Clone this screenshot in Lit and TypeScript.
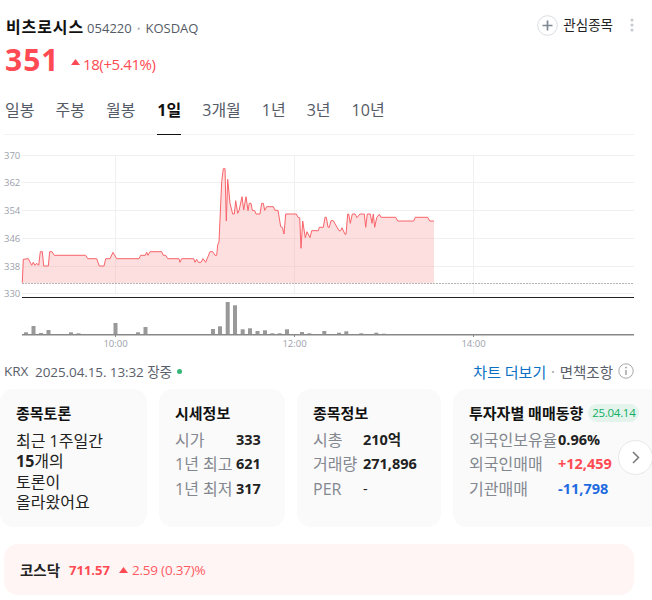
import { LitElement, html, css, svg } from "lit";
import { customElement } from "lit/decorators.js";

const LINE: number[][] = [[22.3,282.7],[23.3,259.3],[28.3,258.7],[31.7,265.3],[33.3,262.3],[35,265.3],[36.7,263.3],[38.7,265.3],[40.3,251.7],[42.3,251.7],[43.7,266],[48.3,266],[49.7,251.7],[52,251.7],[54.3,255.3],[85.7,255.3],[87.7,258.7],[96.7,258.7],[99.3,266],[104,266],[105.7,258.7],[110,258.7],[113,252.3],[116.7,258.7],[139,258.7],[140.7,255.3],[145.3,255.3],[146.7,252.3],[148,255.3],[150,251.7],[161.7,251.7],[163.3,255.3],[165.7,255.3],[167.7,258.7],[179,258.7],[180,262.3],[181.7,258.7],[193.7,258.7],[195,262.3],[196.7,259.3],[198.3,262.3],[201,262.3],[203,258.7],[205.7,262.3],[210,251.7],[212.7,251.7],[215,255.3],[216.7,255.3],[217.7,245],[219,241.7],[221.7,181.7],[223.3,168.7],[225,168.7],[226.3,221],[227.7,179.3],[230,203.3],[232.7,214],[234.3,214],[235.7,200.7],[237.7,213.3],[239,210.7],[242,196.7],[243.7,210],[246,196.7],[248,210.7],[249.3,203.3],[251,203.3],[252.3,210.3],[254.7,210.7],[256,214],[260,214],[261.7,203.3],[263.3,203.3],[264.7,210.3],[266.7,206.7],[273.3,206.7],[275,210.3],[278,210.3],[280.7,226.7],[282.3,227.3],[284,234],[285.7,214],[296.3,214],[298.3,217.7],[299.7,217.7],[301,248.3],[302.7,221],[305.3,237.7],[307,231.7],[310,237.7],[311.7,230.7],[318.3,230.7],[319.3,227.3],[323.3,227.3],[325,217.3],[326.3,217.3],[328,227.3],[329.3,227.3],[331,220.7],[333.3,220.7],[339,230.7],[340.7,230.7],[342,227.7],[345,234.3],[346,234.3],[347.7,214],[348.7,214],[350.3,223.3],[352.3,214],[355,214],[357,217.7],[360,214],[364.3,214],[365.7,227.3],[367.3,214],[370.3,214],[372,223.3],[373.3,214],[374.7,227.3],[376.7,217.7],[379.3,214.3],[381,217.3],[395.7,217.3],[397.7,221],[413.7,221],[415.3,217.3],[427.7,217.3],[429.7,221],[434,221]];

const BARS: number[][] = [[24,332.3],[31.5,326],[39,333],[46.5,330],[69,332.3],[76.5,333.3],[113.5,323],[121,334],[128.5,334],[136,332.3],[143.5,327],[173,334],[181,334],[203.5,334],[211,329],[218,326.3],[225.7,302],[233,305.3],[240.7,329.3],[248,328.3],[255.5,331],[263,330.3],[270.3,333.3],[277.7,333.3],[285,329.3],[292.7,334],[300,332],[307.3,333.3],[315,334],[322.3,331],[337,332.7],[344.3,331.3],[359.3,333.3],[374.3,332.7],[382,333.7],[397,334],[404.3,334],[411.7,334]];

const GRID: [number, string][] = [[155.5,"370"],[182.5,"362"],[210.5,"354"],[238.5,"346"],[266.5,"338"],[293.5,"330"]];
const TIMES: [number, string][] = [[115.5,"10:00"],[294.5,"12:00"],[473.5,"14:00"]];

@customElement("app-root")
export class AppRoot extends LitElement {
  static styles = css`
    :host {
      display: block;
      width: 652px;
      height: 600px;
      overflow: hidden;
      background: #fff;
      color: #111;
      font-family: "Open Sans", "Noto Sans CJK KR", sans-serif;
    }
    .head { display: flex; justify-content: space-between; padding: 16px 18px 0 6px; height: 25px; }
    .title { display: flex; align-items: baseline; gap: 3px; }
    .name { font-size: 16px; font-weight: 700; line-height: 22px; letter-spacing: 0.9px; }
    .code { font-size: 13px; color: #555b66; line-height: 22px; display: flex; gap: 5px; align-items: baseline; }
    .sep { color: #b5b8bd; font-size: 10px; }
    .actions { display: flex; align-items: center; gap: 5px; height: 20px; margin-top: -1px; }
    .plus { display: block; }
    .fav { font-size: 13.5px; color: #222; line-height: 20px; }
    .more { display: block; margin-left: 12px; }
    .price { display: flex; align-items: center; padding: 0 0 0 5px; height: 36px; color: #ff4a53; margin-top: 1px; }
    .big { font-size: 30px; font-weight: 700; line-height: 36px; letter-spacing: 1px; width: 66px; }
    .up { display: block; margin-top: 3px; }
    .chg { font-size: 15px; margin-left: 3px; letter-spacing: -0.4px; padding-top: 8px; line-height: 20px; }
    .tabs { display: flex; gap: 21px; margin: 18px 18px 0 4px; padding-left: 1px; height: 38px; border-bottom: 1px solid #f2f2f2; box-sizing: content-box; }
    .tab { font-size: 16px; color: #555b66; line-height: 21px; padding-top: 4px; height: 34px; box-sizing: border-box; position: relative; }
    .tab.on { color: #111; font-weight: 700; height: 39px; border-bottom: 1px solid #111; margin-left: 1px; }
    .chart { display: block; margin-top: 10px; }
    .axis { font-size: 9.5px; fill: #9ba1ab; font-family: "Open Sans", sans-serif; }
    .status { display: flex; justify-content: space-between; align-items: center; padding: 0 18px 0 4px; height: 20px; margin-top: 6px; font-size: 13.5px; color: #5a606b; }
    .left, .right { display: flex; align-items: center; }
    .left { gap: 7px; letter-spacing: -0.1px; }
    .dot { width: 5px; height: 5px; border-radius: 50%; background: #35b678; margin-left: -2px; }
    .more-link { color: #0b6fc4; font-size: 15px; }
    .mid { color: #aaa; margin: 0 5px; font-size: 9px; }
    .disc { font-size: 14.5px; }
    .info { display: block; margin-left: 5px; }
    .wrap { position: relative; margin-top: 8px; }
    .cards { display: flex; gap: 12px; overflow: hidden; }
    .card { flex: none; height: 138px; background: #fafafa; border-radius: 14px; padding: 13px 0 0 16px; box-sizing: border-box; }
    .c1 { width: 147px; } .c2 { width: 126px; } .c3 { width: 144px; } .c4 { width: 215px; }
    .ct { font-size: 15px; font-weight: 700; line-height: 22px; display: flex; align-items: center; gap: 5px; white-space: nowrap; }
    .badge { font-size: 11.5px; font-weight: 400; color: #0fae63; background: #e4f4ec; border-radius: 9px; line-height: 18px; padding: 0 4px; letter-spacing: -0.3px; }
    .body { margin-top: 7px; font-size: 16px; line-height: 20.3px; color: #222; }
    .body b { font-weight: 700; }
    .rows { display: grid; margin-top: 4px; row-gap: 0; align-items: center; }
    .r2 { grid-template-columns: 61px 1fr; }
    .r3 { grid-template-columns: 50px 1fr; }
    .r4 { grid-template-columns: 89px 1fr; }
    .k { font-size: 16px; line-height: 24.3px; color: #83878f; white-space: nowrap; }
    .v { font-size: 14.5px; font-weight: 700; line-height: 24.3px; color: #222; white-space: nowrap; }
    .v.n { font-weight: 400; }
    .red { color: #ff4a53; } .blue { color: #1f6ce0; }
    .next { position: absolute; left: 618px; top: 51px; width: 35px; height: 35px; border-radius: 50%; background: #fff; border: 1px solid #e8e8e8; box-sizing: border-box; display: flex; align-items: center; justify-content: center; }
    .banner { margin: 17px 18px 0 4px; height: 51px; border-radius: 14px; background: #fff5f5; display: flex; align-items: center; padding-left: 16px; font-size: 13px; gap: 9px; }
    .bn { font-weight: 700; color: #222; font-size: 14.5px; }
    .bv { font-weight: 700; color: #ff4a53; }
    .bc { color: #ff5a62; display: flex; align-items: center; gap: 4px; letter-spacing: -0.2px; font-size: 13.5px; }
  `;

  private chart() {
    const pts = LINE.map((p) => p.join(",")).join(" ");
    const area = `22.3,283 ${pts} 434,283`;
    return html`<svg class="chart" width="652" height="210" viewBox="0 145 652 210" aria-hidden="true">
      ${GRID.map(([y, t]) => svg`
        <line x1="22" x2="634" y1=${y} y2=${y} stroke="#f0f0f0"></line>
        <text class="axis" x="4" y=${y + 3}>${t}</text>`)}
      ${TIMES.map(([x, t]) => svg`
        <line x1=${x} x2=${x} y1="155" y2="294" stroke="#f0f0f0"></line>
        <line x1=${x} x2=${x} y1="334" y2="337" stroke="#888"></line>
        <text class="axis" x=${x} y="347" text-anchor="middle">${t}</text>`)}
      <polygon points=${area} fill="#f9a5a5" fill-opacity="0.36"></polygon>
      <polyline points=${pts} fill="none" stroke="#f9636a" stroke-width="1" stroke-linejoin="round"></polyline>
      <line x1="22" x2="634" y1="283.5" y2="283.5" stroke="#b3b3b3" stroke-dasharray="2 1"></line>
      <line x1="22" x2="634" y1="297.5" y2="297.5" stroke="#222"></line>
      ${BARS.map(([x, y]) => svg`<rect x=${x} y=${y} width="4" height=${335 - y} fill="#999"></rect>`)}
      <rect x="22" y="334" width="612" height="1.5" fill="#888"></rect>
    </svg>`;
  }

  render() {
    return html`
      <div class="head">
        <div class="title">
          <span class="name">비츠로시스</span>
          <span class="code"><span>054220</span><span class="sep">•</span><span>KOSDAQ</span></span>
        </div>
        <div class="actions">
          <svg class="plus" width="21" height="21" viewBox="0 0 21 21">
            <circle cx="10.5" cy="10.5" r="9.8" fill="#fff" stroke="#d8dce2"></circle>
            <path d="M10.5 5.5v10M5.5 10.5h10" stroke="#7e8794" stroke-width="1.7"></path>
          </svg>
          <span class="fav">관심종목</span>
          <svg class="more" width="4" height="14" viewBox="0 0 4 14">
            <circle cx="2" cy="2" r="1.6" fill="#c6cad1"></circle>
            <circle cx="2" cy="7" r="1.6" fill="#c6cad1"></circle>
            <circle cx="2" cy="12" r="1.6" fill="#c6cad1"></circle>
          </svg>
        </div>
      </div>
      <div class="price">
        <span class="big">351</span>
        <svg class="up" width="9" height="6" viewBox="0 0 9 6"><path d="M4.5 0 9 6H0z" fill="#ff4a53"></path></svg>
        <span class="chg">18(+5.41%)</span>
      </div>
      <div class="tabs">
        ${["일봉","주봉","월봉","1일","3개월","1년","3년","10년"].map(
          (t) => html`<span class="tab ${t === "1일" ? "on" : ""}">${t}</span>`
        )}
      </div>
      ${this.chart()}
      <div class="status">
        <div class="left"><span>KRX</span><span>2025.04.15. 13:32 장중</span><span class="dot"></span></div>
        <div class="right">
          <span class="more-link">차트 더보기</span><span class="mid">•</span><span class="disc">면책조항</span>
          <svg class="info" width="16" height="16" viewBox="0 0 16 16">
            <circle cx="8" cy="8" r="7.2" fill="none" stroke="#a8a8a8"></circle>
            <path d="M8 7v5" stroke="#999" stroke-width="1.3"></path>
            <circle cx="8" cy="4.6" r="0.9" fill="#999"></circle>
          </svg>
        </div>
      </div>
      <div class="wrap">
        <div class="cards">
          <div class="card c1">
            <div class="ct">종목토론</div>
            <div class="body">최근 1주일간<br /><b>15</b>개의<br />토론이<br />올라왔어요</div>
          </div>
          <div class="card c2">
            <div class="ct">시세정보</div>
            <div class="rows r2">
              <span class="k">시가</span><span class="v">333</span>
              <span class="k">1년 최고</span><span class="v">621</span>
              <span class="k">1년 최저</span><span class="v">317</span>
            </div>
          </div>
          <div class="card c3">
            <div class="ct">종목정보</div>
            <div class="rows r3">
              <span class="k">시총</span><span class="v">210억</span>
              <span class="k">거래량</span><span class="v">271,896</span>
              <span class="k">PER</span><span class="v n">-</span>
            </div>
          </div>
          <div class="card c4">
            <div class="ct">투자자별 매매동향 <span class="badge">25.04.14</span></div>
            <div class="rows r4">
              <span class="k">외국인보유율</span><span class="v">0.96%</span>
              <span class="k">외국인매매</span><span class="v red">+12,459</span>
              <span class="k">기관매매</span><span class="v blue">-11,798</span>
            </div>
          </div>
        </div>
        <div class="next">
          <svg width="8" height="13" viewBox="0 0 8 13"><path d="M1 1l5.5 5.5L1 12" fill="none" stroke="#777" stroke-width="1.5"></path></svg>
        </div>
      </div>
      <div class="banner">
        <span class="bn">코스닥</span>
        <span class="bv">711.57</span>
        <span class="bc">
          <svg width="9" height="6" viewBox="0 0 9 6"><path d="M4.5 0 9 6H0z" fill="#ff4a53"></path></svg>
          2.59 (0.37)%
        </span>
      </div>
    `;
  }
}
